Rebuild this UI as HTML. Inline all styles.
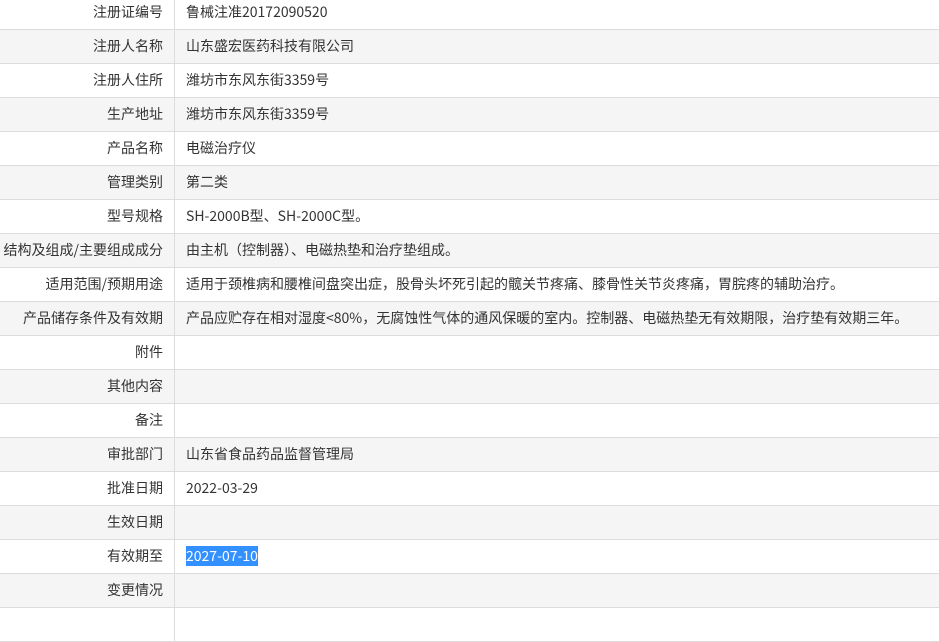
<!DOCTYPE html>
<html><head><meta charset="utf-8"><style>
html,body{margin:0;padding:0;background:#fff;overflow:hidden;width:939px;height:615px}
table{position:absolute;top:-4px;left:0;border-collapse:collapse;width:960px;font-family:"Noto Sans CJK SC","Liberation Sans",sans-serif;font-size:14px;color:#333}
td{height:33px;border-bottom:1px solid #dcdcdc;padding:0;line-height:33px;white-space:nowrap;overflow:hidden}
td.l{width:163px;max-width:163px;text-align:right;padding-right:11px;border-right:1px solid #dcdcdc}
td.v{padding-left:11px}
tr:nth-child(even){background:#f5f5f5}
.sel{background:#3390ff;color:#fff}
</style></head><body>
<table>
<tr><td class="l">注册证编号</td><td class="v">鲁械注准20172090520</td></tr>
<tr><td class="l">注册人名称</td><td class="v">山东盛宏医药科技有限公司</td></tr>
<tr><td class="l">注册人住所</td><td class="v">潍坊市东风东街3359号</td></tr>
<tr><td class="l">生产地址</td><td class="v">潍坊市东风东街3359号</td></tr>
<tr><td class="l">产品名称</td><td class="v">电磁治疗仪</td></tr>
<tr><td class="l">管理类别</td><td class="v">第二类</td></tr>
<tr><td class="l">型号规格</td><td class="v">SH-2000B型、SH-2000C型。</td></tr>
<tr><td class="l" style="direction:rtl">结构及组成/主要组成成分</td><td class="v">由主机（控制器）、电磁热垫和治疗垫组成。</td></tr>
<tr><td class="l">适用范围/预期用途</td><td class="v">适用于颈椎病和腰椎间盘突出症，股骨头坏死引起的髋关节疼痛、膝骨性关节炎疼痛，胃脘疼的辅助治疗。</td></tr>
<tr><td class="l">产品储存条件及有效期</td><td class="v">产品应贮存在相对湿度&lt;80%，无腐蚀性气体的通风保暖的室内。控制器、电磁热垫无有效期限，治疗垫有效期三年。</td></tr>
<tr><td class="l">附件</td><td class="v"></td></tr>
<tr><td class="l">其他内容</td><td class="v"></td></tr>
<tr><td class="l">备注</td><td class="v"></td></tr>
<tr><td class="l">审批部门</td><td class="v">山东省食品药品监督管理局</td></tr>
<tr><td class="l">批准日期</td><td class="v">2022-03-29</td></tr>
<tr><td class="l">生效日期</td><td class="v"></td></tr>
<tr><td class="l">有效期至</td><td class="v"><span class="sel">2027-07-10</span></td></tr>
<tr><td class="l">变更情况</td><td class="v"></td></tr>
<tr><td class="l"></td><td class="v"></td></tr>
</table>
</body></html>
